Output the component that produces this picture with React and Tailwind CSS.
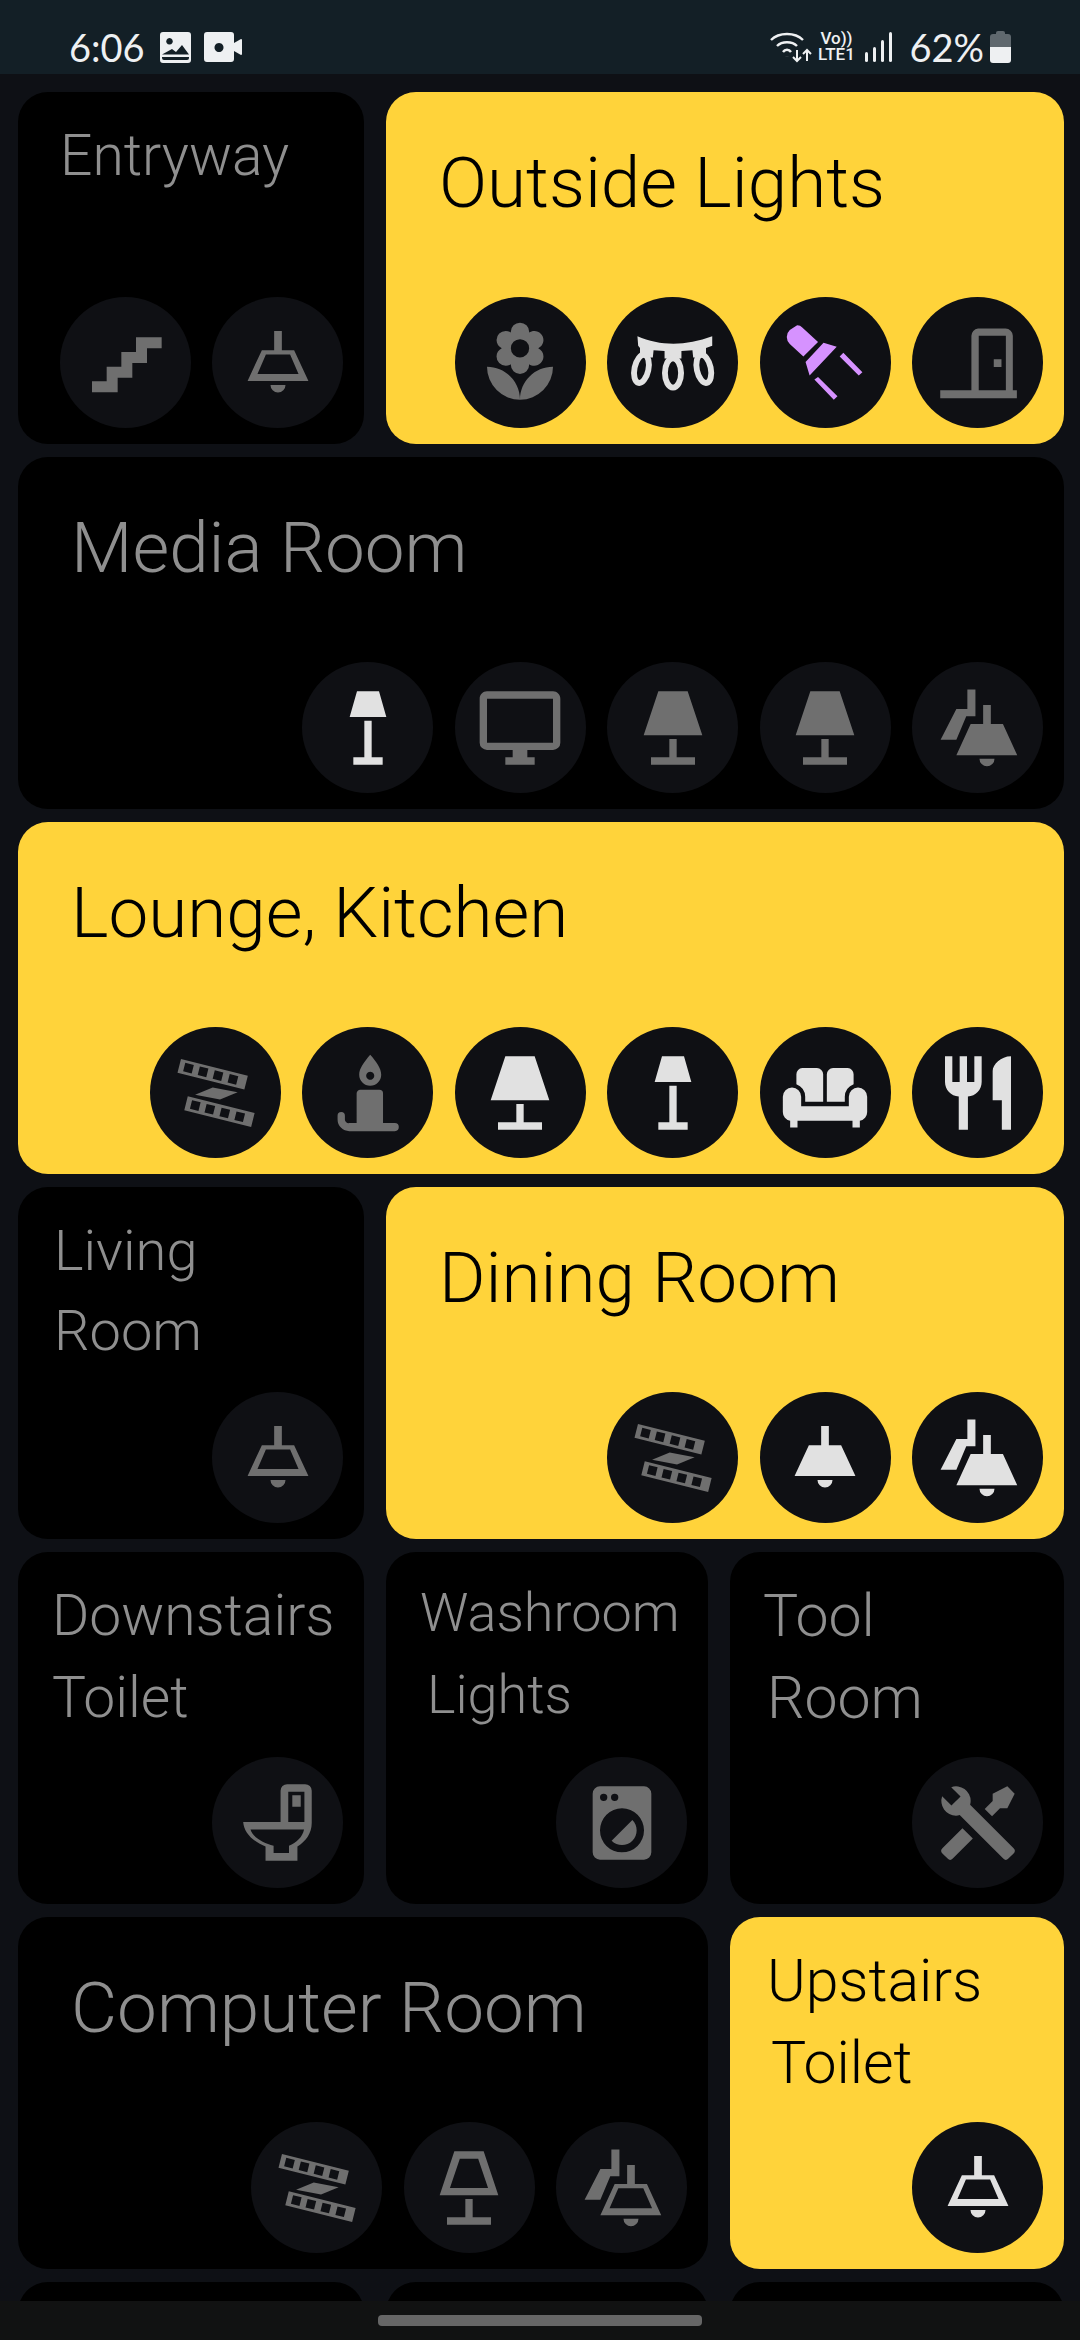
// material design icon shapes, 24 unit box
const ICONS = {
  stairs: "M15,5V9H11V13H7V17H3V20H10V16H14V12H18V8H22V5H15Z",
  bell: "M10.95 3.3h2.1v5.2h3.35l3.9 8.4H3.7l3.9-8.4h3.35zM9.95 18h4.1a2.05 2.05 0 0 1-4.1 0z",
  bellOutline:
    "M10.95 3.3h2.1v5.2h3.35l3.9 8.4H3.7l3.9-8.4h3.35zM8.7 9.7L6.4 15H17.6L15.3 9.7zM9.95 18h4.1a2.05 2.05 0 0 1-4.1 0z",
  doubleBell:
    "M9.1 1.5h2.2v7.3H8.8L6.1 15.2H1.8L6.1 6.8H9.1zM13.4 5.7h2.1v5.2H18.8L22.7 19.4H6.1L10 10.9h3.4zM12.4 20.4h4.1a2.05 2.05 0 0 1-4.1 0z",
  doubleBellOutline:
    "M9.1 1.5h2.2v7.3H8.8L6.1 15.2H1.8L6.1 6.8H9.1zM13.4 5.7h2.1v5.2H18.8L22.7 19.4H6.1L10 10.9h3.4zM11 12.1L8.6 17.5H20.2L17.8 12.1zM12.4 20.4h4.1a2.05 2.05 0 0 1-4.1 0z",
  lamp: "M8,2H16L20,14H4L8,2M11,15H13V20H18V22H6V20H11V15Z",
  lampOutline: "M11 15H13V20H18V22H6V20H11V15M8 2H16L20 14H4L8 2M9.5 4L6.8 12H17.2L14.5 4H9.5Z",
  floorLamp: "M9,2H15L17,9H7L9,2M11,10H13V20H16V22H8V20H11V10Z",
  monitor:
    "M21,16H3V4H21M21,2H3C1.89,2 1,2.89 1,4V16A2,2 0 0,0 3,18H10V20H8V22H16V20H14V18H21A2,2 0 0,0 23,16V4C23,2.89 22.1,2 21,2Z",
  flower:
    "M3,13A9,9 0 0,0 12,22C12,17 7.97,13 3,13M12,5.5A2.5,2.5 0 0,1 14.5,8A2.5,2.5 0 0,1 12,10.5A2.5,2.5 0 0,1 9.5,8A2.5,2.5 0 0,1 12,5.5M5.6,10.25A2.5,2.5 0 0,0 8.1,12.75C8.63,12.75 9.12,12.58 9.5,12.31C9.5,12.37 9.5,12.43 9.5,12.5A2.5,2.5 0 0,0 12,15A2.5,2.5 0 0,0 14.5,12.5C14.5,12.43 14.5,12.37 14.5,12.31C14.88,12.58 15.37,12.75 15.9,12.75C17.28,12.75 18.4,11.63 18.4,10.25C18.4,9.25 17.81,8.4 16.97,8C17.81,7.6 18.4,6.74 18.4,5.75C18.4,4.37 17.28,3.25 15.9,3.25C15.37,3.25 14.88,3.41 14.5,3.69C14.5,3.63 14.5,3.56 14.5,3.5A2.5,2.5 0 0,0 12,1A2.5,2.5 0 0,0 9.5,3.5C9.5,3.56 9.5,3.63 9.5,3.69C9.12,3.41 8.63,3.25 8.1,3.25A2.5,2.5 0 0,0 5.6,5.75C5.6,6.74 6.19,7.6 7.03,8C6.19,8.4 5.6,9.25 5.6,10.25M12,22A9,9 0 0,0 21,13C16,13 12,17 12,22Z",
  door: "M12 2.6h7.5a2 2 0 0 1 2 2V19.4h1.1v2.2H1.7v-2.2H10.2V4.6a2 2 0 0 1 1.8-2zM12.2 4.6v14.8h7.4V4.6zM16.3 11h2.1v2.1h-2.1z",
  sofa: "M3 10.5a2.5 2.5 0 0 1 2.5 2.5v2.6h13V13a2.5 2.5 0 0 1 5 0v4.2a2.4 2.4 0 0 1-2 2.4v1.8h-2v-1.8H4.5v1.8h-2v-1.8a2.4 2.4 0 0 1-2-2.4V13A2.5 2.5 0 0 1 3 10.5zM5.8 5.2h4a1.7 1.7 0 0 1 1.7 1.7v7.5H6.6V13a3.6 3.6 0 0 0-2.4-3.4V6.9a1.7 1.7 0 0 1 1.6-1.7zM14.2 5.2h4a1.7 1.7 0 0 1 1.6 1.7v2.7a3.6 3.6 0 0 0-2.4 3.4v1.4h-4.9V6.9a1.7 1.7 0 0 1 1.7-1.7z",
  cutlery:
    "M11,9H9V2H7V9H5V2H3V9C3,11.12 4.66,12.84 6.75,12.97V22H9.25V12.97C11.34,12.84 13,11.12 13,9V2H11V9M16,6V14H18.5V22H21V2C18.24,2 16,4.24 16,6Z",
  candle:
    "M12.6 1.6C14.3 3.5 15.6 5.3 15.6 7A3 3 0 0 1 9.6 7C9.6 5.3 11 3.5 12.6 1.6zM12.6 6.2a1.1 1.1 0 1 0 .01 0zM10 11.1h5.1a1 1 0 0 1 1 1V20.2h3.2a1.1 1.1 0 0 1 0 2.2H7a3.2 3.2 0 0 1-3.3-3.2v-1a1 1 0 0 1 2 0v1a1 1 0 0 0 1.2 1h2V12.1a1 1 0 0 1 1.1-1z",
  led: "M4.4 1.7a1.8 1.8 0 0 1 1.4.6L10.1 6.3 6.1 10.2 2.4 6.8A2.6 2.6 0 0 1 2.4 3zM11.6 6.5l3.6 1.1-7.4 7.8-1.1-3.7zM17 9.2l5.2 5.3-1 .9L16 10.2zM10.1 15.8l5.3 5.3-1 .9-5.3-5.5z",
  toilet:
    "M12.7 11.7V3.2A1.8 1.8 0 0 1 14.5 1.4H19.4A1.8 1.8 0 0 1 21.2 3.2V12C21.2 14.8 19.6 17 17.3 18.4V22.3H8.6V18.4C5 17 2.7 14.5 2.5 11.7zM14.8 3.5V11.7H19.2V3.5zM15.9 4.4V7.6H18.2V4.4zM4.5 13.8C5 15.8 8 17.5 10.8 18.2V20.2H15V18.2C17 17.5 18.7 15.8 19.1 13.8z",
  washer:
    "M14.83,11.17C16.39,12.73 16.39,15.27 14.83,16.83C13.27,18.39 10.73,18.39 9.17,16.83L14.83,11.17M6,2H18A2,2 0 0,1 20,4V20A2,2 0 0,1 18,22H6A2,2 0 0,1 4,20V4A2,2 0 0,1 6,2M7,4A1,1 0 0,0 6,5A1,1 0 0,0 7,6A1,1 0 0,0 8,5A1,1 0 0,0 7,4M10,4A1,1 0 0,0 9,5A1,1 0 0,0 10,6A1,1 0 0,0 11,5A1,1 0 0,0 10,4M12,8A6,6 0 0,0 6,14A6,6 0 0,0 12,20A6,6 0 0,0 18,14A6,6 0 0,0 12,8Z",
  tools:
    "M21.71 20.29L20.29 21.71A1 1 0 0 1 18.88 21.71L7 9.85A3.81 3.81 0 0 1 6 10A4 4 0 0 1 2.22 4.7L4.76 7.24L5.29 6.71L6.71 5.29L7.24 4.76L4.7 2.22A4 4 0 0 1 10 6A3.81 3.81 0 0 1 9.85 7L21.71 18.88A1 1 0 0 1 21.71 20.29M2.29 18.88A1 1 0 0 0 2.29 20.29L3.71 21.71A1 1 0 0 0 5.12 21.71L10.59 16.25L7.76 13.42M20 2L16 4V6L13.83 8.17L15.83 10.17L18 8H20L22 4Z",
};

const strip =
  "M0 0h18.8v3.9H0zM1.4 .75v2.4h2.4V.75zM5.5 .75v2.4h2.4V.75zM9.7 .75v2.4h2.4V.75zM13.9 .75v2.4h2.4V.75z";

function MdiIcon({ name }) {
  if (name === "film") {
    return (
      <svg viewBox="0 0 24 24" className="w-[88px] h-[88px] fill-current">
        <path fillRule="evenodd" d={strip} transform="translate(2.45 2.7) rotate(14.1)" />
        <path d="M11.1 10.5L17.9 11.8L13.1 13.8L6.3 12.5Z" />
        <path fillRule="evenodd" d={strip} transform="translate(4.3 12.9) rotate(14.1)" />
      </svg>
    );
  }
  if (name === "string") {
    return (
      <svg viewBox="0 0 24 24" className="w-[88px] h-[88px] fill-current">
        <path d="M2.3 4.7C8.5 7.4 15.5 7.4 22.7 4.7V7.3L21 7.9V10.5H17.5L17.3 8.5L14.3 8.7V10.8H9.7V8.7L6.7 8.5L6.5 10.5H3V7.9L2.5 7.3z" />
        <g className="fill-none stroke-current" strokeWidth="1.6">
          <ellipse cx="3.4" cy="13.6" rx="1.9" ry="3.9" transform="rotate(12 3.4 13.6)" />
          <ellipse cx="12" cy="14.7" rx="2.2" ry="4" />
          <ellipse cx="20.4" cy="13.6" rx="1.9" ry="3.9" transform="rotate(-12 20.4 13.6)" />
        </g>
      </svg>
    );
  }
  return (
    <svg viewBox="0 0 24 24" className="w-[88px] h-[88px] fill-current">
      <path fillRule={name === "washer" || name === "flower" || name === "tools" ? "nonzero" : "evenodd"} d={ICONS[name]} />
    </svg>
  );
}

// tone: on = light, off = gray, led = purple
function RoundIcon({ name, tone }) {
  const toneClass =
    tone === "on" ? "text-[#e1e1e1]" : tone === "led" ? "text-[#d692ff]" : "text-[#6f6f6f]";
  return (
    <div className={`w-[131px] h-[131px] rounded-full bg-[#0f1014] flex items-center justify-center shrink-0 ${toneClass}`}>
      <MdiIcon name={name} />
    </div>
  );
}

function Room({ lines, active, width, titleClass, nudge = "", icons = [] }) {
  return (
    <div
      className={`h-[352px] shrink-0 rounded-[30px] flex flex-col justify-between overflow-hidden ${width} ${
        active ? "bg-[#ffd33a] text-black" : "bg-black text-[#8f8f8f]"
      }`}
    >
      <div className={`font-['Roboto',sans-serif] font-light whitespace-nowrap ${titleClass}`}>
        {lines.map((line, index) => (
          <div key={line} className={index === 1 ? nudge : ""}>
            {line}
          </div>
        ))}
      </div>
      <div className="flex justify-end gap-[21.4px] pr-[21px] pb-[16px]">
        {icons.map(([name, tone], index) => (
          <RoundIcon key={index} name={name} tone={tone} />
        ))}
      </div>
    </div>
  );
}

function StatusBar() {
  return (
    <div className="h-[74px] shrink-0 bg-[#131f26] flex items-end justify-between pl-[69px] pr-[69px] pb-[11px] text-[#eef0f2]">
      <div className="flex items-center gap-[12px] h-[32px]">
        <span className="font-['Lato',sans-serif] text-[38px] leading-[32px] font-normal mr-[3px]">6:06</span>
        <svg viewBox="0 0 31 31" className="w-[31px] h-[31px]">
          <path
            fill="currentColor"
            fillRule="evenodd"
            d="M3 0h25a3 3 0 0 1 3 3v25a3 3 0 0 1-3 3H3a3 3 0 0 1-3-3V3a3 3 0 0 1 3-3zM9.5 6a3.3 3.3 0 1 0 .01 0zM2 26a2 2 0 0 0 2 2h23a2 2 0 0 0 2-2v-1H2zM2 22.5h27L22 13l-6 7-4-3z"
          />
        </svg>
        <svg viewBox="0 0 38 30" className="w-[38px] h-[30px] ml-[1px]">
          <path
            fill="currentColor"
            fillRule="evenodd"
            d="M3 0h24a3 3 0 0 1 3 3v24a3 3 0 0 1-3 3H3a3 3 0 0 1-3-3V3a3 3 0 0 1 3-3zM15 11a4.5 4.5 0 1 0 .01 0zM30 11l7-4a1 1 0 0 1 1 1v14a1 1 0 0 1-1 1l-7-4z"
          />
        </svg>
      </div>
      <div className="flex items-end h-[34px]">
        <svg viewBox="0 0 42 32" className="w-[42px] h-[32px] mr-[4px]" fill="none" stroke="currentColor" strokeWidth="2.4">
          <path d="M1 9C9 1 25 1 33 9" />
          <path d="M7 15C12 10 22 10 27 15" />
          <path d="M13 21C15 18 19 18 21 21" />
          <path d="M17 25v.1" strokeWidth="3" />
          <path d="M27 19v11M23 26l4 4 4-4" strokeWidth="2" />
          <path d="M37 30V19M33 23l4-4 4 4" strokeWidth="2" />
        </svg>
        <div className="font-['Roboto',sans-serif] font-medium flex flex-col items-center w-[40px] mr-[9px]">
          <span className="text-[17px] leading-[15px]">Vo))</span>
          <span className="text-[17px] leading-[17px]">LTE1</span>
        </div>
        <svg viewBox="0 0 28 30" className="w-[28px] h-[30px] mb-[1px] mr-[16px]" fill="currentColor">
          <rect x="0" y="20" width="3" height="10" rx="1.5" />
          <rect x="8" y="15" width="3" height="15" rx="1.5" />
          <rect x="16" y="8" width="3" height="22" rx="1.5" />
          <rect x="24" y="0" width="3" height="30" rx="1.5" />
        </svg>
        <span className="font-['Lato',sans-serif] text-[38px] leading-[32px] font-normal mr-[6px]">62%</span>
        <div className="w-[21px] h-[32px] flex flex-col items-center">
          <div className="w-[9px] h-[3px] rounded-t-[2px] bg-[#5f686e]" />
          <div className="w-[21px] h-[13px] rounded-t-[3px] bg-[#5f686e]" />
          <div className="w-[21px] h-[16px] rounded-b-[3px] bg-[#eef0f2]" />
        </div>
      </div>
    </div>
  );
}

export default function App() {
  return (
    <div className="w-[1080px] h-[2340px] bg-[#0e1015] flex flex-col overflow-hidden">
      <StatusBar />
      <div className="flex-1 min-h-0 overflow-hidden pt-[18px] pl-[18px] pr-[16px] flex flex-col gap-[13px]">
        <div className="flex gap-[22px] shrink-0">
          <Room
            lines={["Entryway"]}
            width="w-[346px]"
            titleClass="text-[57px] leading-[82px] pl-[42px] pt-[23px]"
            icons={[["stairs"], ["bellOutline"]]}
          />
          <Room
            active
            lines={["Outside Lights"]}
            width="w-[678px]"
            titleClass="text-[71px] leading-[82px] pl-[53px] pt-[50px]"
            icons={[["flower"], ["string", "on"], ["led", "led"], ["door"]]}
          />
        </div>
        <Room
          lines={["Media Room"]}
          width="w-full"
          titleClass="text-[71px] leading-[82px] pl-[53px] pt-[50px]"
          icons={[["floorLamp", "on"], ["monitor"], ["lamp"], ["lamp"], ["doubleBell"]]}
        />
        <Room
          active
          lines={["Lounge, Kitchen"]}
          width="w-full"
          titleClass="text-[71px] leading-[82px] pl-[53px] pt-[50px]"
          icons={[["film"], ["candle"], ["lamp", "on"], ["floorLamp", "on"], ["sofa", "on"], ["cutlery", "on"]]}
        />
        <div className="flex gap-[22px] shrink-0">
          <Room
            lines={["Living", "Room"]}
            width="w-[346px]"
            titleClass="text-[56px] leading-[80px] pl-[36px] pt-[24px]"
            icons={[["bellOutline"]]}
          />
          <Room
            active
            lines={["Dining Room"]}
            width="w-[678px]"
            titleClass="text-[71px] leading-[82px] pl-[53px] pt-[50px]"
            icons={[["film"], ["bell", "on"], ["doubleBell", "on"]]}
          />
        </div>
        <div className="flex gap-[22px] shrink-0">
          <Room
            lines={["Downstairs", "Toilet"]}
            width="w-[346px]"
            titleClass="text-[57px] leading-[82px] pl-[34px] pt-[23px]"
            icons={[["toilet"]]}
          />
          <Room
            lines={["Washroom", "Lights"]}
            width="w-[322px]"
            titleClass="text-[54px] leading-[82px] pl-[34px] pt-[20px]"
            nudge="pl-[7px]"
            icons={[["washer"]]}
          />
          <Room
            lines={["Tool", "Room"]}
            width="w-[334px]"
            titleClass="text-[59px] leading-[82px] pl-[33px] pt-[23px]"
            nudge="pl-[4px]"
            icons={[["tools"]]}
          />
        </div>
        <div className="flex gap-[22px] shrink-0">
          <Room
            lines={["Computer Room"]}
            width="w-[690px]"
            titleClass="text-[71px] leading-[82px] pl-[53px] pt-[50px]"
            icons={[["film"], ["lampOutline"], ["doubleBellOutline"]]}
          />
          <Room
            active
            lines={["Upstairs", "Toilet"]}
            width="w-[334px]"
            titleClass="text-[59px] leading-[82px] pl-[37px] pt-[23px]"
            nudge="pl-[4px]"
            icons={[["bellOutline", "on"]]}
          />
        </div>
        <div className="flex gap-[22px] shrink-0">
          <div className="w-[346px] h-[352px] rounded-[30px] bg-black" />
          <div className="w-[322px] h-[352px] rounded-[30px] bg-black" />
          <div className="w-[334px] h-[352px] rounded-[30px] bg-black" />
        </div>
      </div>
      <div className="h-[39px] shrink-0 bg-[#111212] flex justify-center pt-[14px]">
        <div className="w-[324px] h-[11px] rounded-[4px] bg-[#666666]" />
      </div>
    </div>
  );
}
